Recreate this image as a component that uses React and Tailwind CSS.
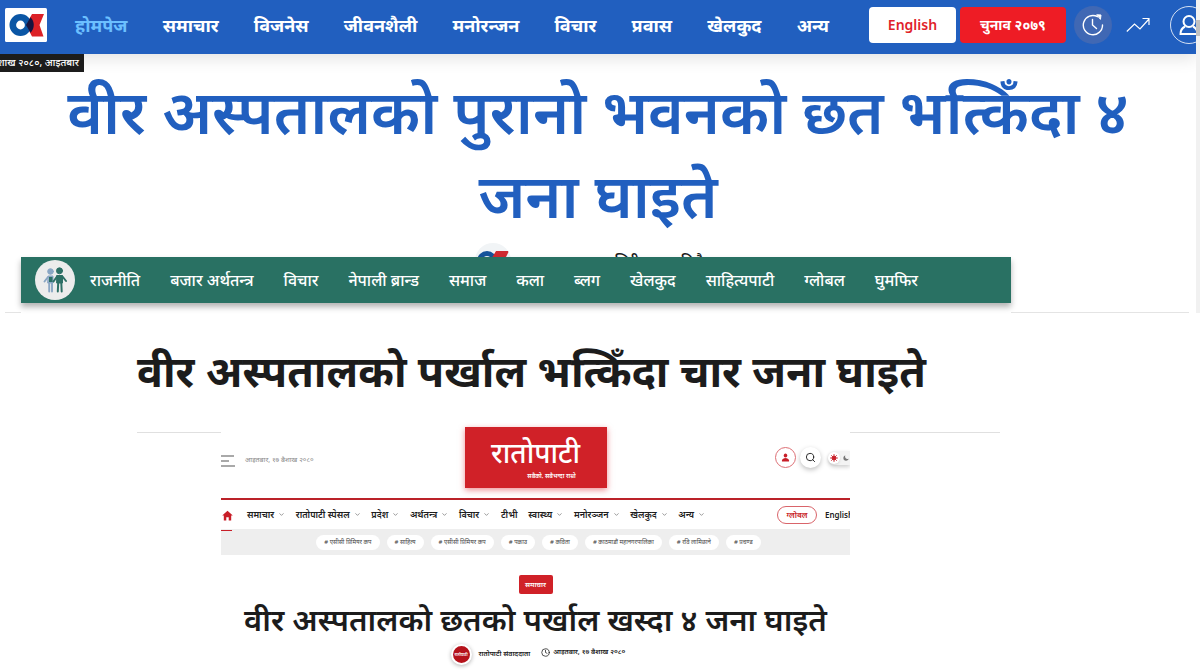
import { FiChevronDown, FiClock, FiSearch } from "react-icons/fi";
import { IoPerson, IoMoon } from "react-icons/io5";
import { IoMdHome } from "react-icons/io";

const topNav = ["होमपेज", "समाचार", "विजनेस", "जीवनशैली", "मनोरन्जन", "विचार", "प्रवास", "खेलकुद", "अन्य"];

const greenNav = [
  "राजनीति",
  "बजार अर्थतन्त्र",
  "विचार",
  "नेपाली ब्रान्ड",
  "समाज",
  "कला",
  "ब्लग",
  "खेलकुद",
  "साहित्यपाटी",
  "ग्लोबल",
  "घुमफिर",
];

const redNav = [
  { label: "समाचार", menu: true },
  { label: "रातोपाटी स्पेसल", menu: true },
  { label: "प्रदेश", menu: true },
  { label: "अर्थतन्त्र", menu: true },
  { label: "विचार", menu: true },
  { label: "टीभी", menu: false },
  { label: "स्वास्थ्य", menu: true },
  { label: "मनोरञ्जन", menu: true },
  { label: "खेलकुद", menu: true },
  { label: "अन्य", menu: true },
];

const tags = [
  "एसीसी प्रिमियर कप",
  "साहित्य",
  "एसीसी प्रिमियर कप",
  "पक्राउ",
  "कविता",
  "काठमाडौं महानगरपालिका",
  "रवि लामिछाने",
  "प्रचण्ड",
];

export default function App() {
  return (
    <div className="min-h-screen bg-white overflow-hidden font-['Noto_Sans','Noto_Sans_Devanagari',sans-serif] text-[#1c1c1c]">
      <KhabarPage />
      <GreenPage />
      <RatoPage />
    </div>
  );
}

function KhabarPage() {
  return (
    <section className="h-[257px] relative">
      <div className="h-full overflow-hidden mr-1">
        <header className="h-[54px] bg-[#215fbf] flex items-center pl-[5px] overflow-hidden shadow-[0_4px_16px_rgba(0,0,0,0.12)] relative">
          <a href="#" aria-label="OK" className="shrink-0 mb-1">
            <OkLogo />
          </a>
          <nav className="flex flex-1 justify-between ml-7 mr-10 mb-1 text-[18px] leading-7 font-bold whitespace-nowrap text-white">
            {topNav.map((t, i) => (
              <a key={t} href="#" className={i === 0 ? "text-[#6cc0ff]" : ""}>
                {t}
              </a>
            ))}
          </nav>
          <div className="flex items-center shrink-0 mb-1 text-white">
            <button className="w-[87px] h-9 rounded bg-white text-[#e01f2b] text-sm font-semibold">English</button>
            <button className="w-[106px] h-9 ml-1 rounded bg-[#ee1c25] text-sm font-bold whitespace-nowrap">
              चुनाव २०७९
            </button>
            <button aria-label="ताजा" className="size-[38px] ml-2 rounded-full bg-[#4068b4] grid place-items-center">
              <ClockArrow />
            </button>
            <button aria-label="ट्रेन्डिङ" className="ml-[14px]">
              <TrendLine />
            </button>
            <button
              aria-label="प्रोफाइल"
              className="size-[38px] ml-5 -mr-3 rounded-full border border-white/80 grid place-items-center"
            >
              <UserLine />
            </button>
          </div>
        </header>
        <div className="w-[84px] h-[18px] bg-[#1c1c1c] text-white text-[10px] leading-[17px] font-medium flex justify-end pr-[5px] whitespace-nowrap overflow-hidden relative">
          <span>१७ वैशाख २०८०, आइतबार</span>
        </div>
        <h1 className="text-center text-[#215fbf] font-semibold text-[61px] leading-[84px] -mt-[3px] px-12">
          वीर अस्पतालको पुरानो भवनको छत भत्किँदा ४ जना घाइते
        </h1>
        <div className="flex justify-center gap-[104px] mt-[6px] pr-1 text-sm font-semibold">
          <span className="size-9 rounded-full bg-[#f1f4f6] grid place-items-center overflow-hidden">
            <OkMark />
          </span>
          <span className="mt-2">शिरीषकुमार निरौला</span>
        </div>
      </div>
      {/* scrollbar */}
      <div className="absolute right-0 top-0 w-1 h-[313px] bg-[#f1f1f1]">
        <div className="h-4 mt-5 bg-[#c1c1c1]" />
      </div>
    </section>
  );
}

function GreenPage() {
  return (
    <section>
      <div className="h-14 ml-[5px] mr-[11px] pl-4 pr-[178px] border-b border-[#e4e4e4] relative">
        <div className="bg-white h-14">
          <nav className="h-[46px] bg-[#297163] shadow-[0_4px_6px_rgba(0,0,0,0.3)] flex items-center pl-[14px] text-white">
            <a href="#" aria-label="गृहपृष्ठ" className="size-10 rounded-full bg-[#ececec] grid place-items-center shrink-0">
              <PeopleLogo />
            </a>
            <ul className="flex flex-1 justify-between ml-[15px] mr-[93px] text-base font-medium whitespace-nowrap">
              {greenNav.map((t) => (
                <li key={t}>
                  <a href="#">{t}</a>
                </li>
              ))}
            </ul>
          </nav>
        </div>
      </div>
      <div className="ml-[137px] mr-[200px] h-[120px] border-b border-[#e0e0e0]">
        <h2 className="text-[43px] leading-[60px] pt-7 font-bold whitespace-nowrap">
          वीर अस्पतालको पर्खाल भत्किँदा चार जना घाइते
        </h2>
      </div>
    </section>
  );
}

function RatoPage() {
  return (
    <section className="relative bg-white ml-[221px] mr-[350px] -mt-[6px]">
      <div className="grid grid-cols-[1fr_auto_1fr] items-center h-[71px]">
        <div className="flex items-center gap-[10px] min-w-0 mb-1">
          <button aria-label="मेनु">
            <svg width="14" height="12" viewBox="0 0 14 12" stroke="#555" strokeWidth="1.2">
              <path d="M0 1h13M0 6h8M0 11h14" />
            </svg>
          </button>
          <span className="text-[7px] text-[#8a8a8a] whitespace-nowrap">आइतबार, १७ बैशाख २०८०</span>
        </div>
        <a
          href="#"
          className="w-[142px] h-[61px] mb-[10px] bg-[#d02128] text-white shadow-[0_2px_6px_rgba(220,30,40,0.5)] flex flex-col items-center justify-center"
        >
          <span className="text-[28px] leading-9 font-medium">रातोपाटी</span>
          <span className="text-[6px] leading-3 font-semibold pl-8">सबैको, सबैभन्दा राम्रो</span>
        </a>
        <div className="flex items-center justify-end overflow-hidden h-[61px] mb-[10px]">
          <button aria-label="लगइन" className="size-[21px] rounded-full border border-[#dd6f75] grid place-items-center">
            <IoPerson className="text-[9px] text-[#c81e28]" />
          </button>
          <button
            aria-label="खोज"
            className="size-[21px] ml-1 rounded-full bg-white shadow-[0_2px_5px_rgba(0,0,0,0.25)] grid place-items-center"
          >
            <FiSearch className="text-[11px]" />
          </button>
          <button
            aria-label="मोड"
            className="w-[22px] h-[14px] ml-[7px] rounded-l-full bg-[#f3f3f3] shadow-[0_2px_4px_rgba(0,0,0,0.2)] flex items-center gap-[3px]"
          >
            <span className="size-3 rounded-full bg-white shadow grid place-items-center">
              <SunDot />
            </span>
            <IoMoon className="text-[6px] text-[#777]" />
          </button>
        </div>
      </div>

      <nav className="h-[31px] border-t-2 border-[#bb2229] flex items-center text-[9px] font-semibold whitespace-nowrap">
        <a
          href="#"
          aria-label="गृहपृष्ठ"
          className="w-[11px] h-[31px] -mb-[2px] border-b border-[#c81e28] grid place-items-center shrink-0 relative"
        >
          <IoMdHome className="text-[13px] text-[#c81e28]" />
        </a>
        <ul className="flex flex-1 justify-between ml-[15px] mr-[72px]">
          {redNav.map(({ label, menu }) => (
            <li key={label}>
              <a href="#" className="flex items-center gap-1">
                {label}
                {menu && <FiChevronDown className="text-[7px] text-[#555]" />}
              </a>
            </li>
          ))}
        </ul>
        <a
          href="#"
          className="w-10 h-[18px] rounded-full border border-[#d9646a] text-[#c81e28] text-[8px] grid place-items-center shrink-0"
        >
          ग्लोबल
        </a>
        <a href="#" className="w-[25px] ml-2 text-[8px] overflow-hidden shrink-0">
          English
        </a>
      </nav>

      <ul className="h-[26px] bg-[#eeeeee] flex items-center justify-center gap-[7px] pl-[6px] text-[6px] leading-[15px] text-[#444] whitespace-nowrap">
        {tags.map((t, i) => (
          <li key={i}>
            <a href="#" className="block rounded-full bg-white px-2">
              # {t}
            </a>
          </li>
        ))}
      </ul>

      <article className="flex flex-col items-center">
        <span className="mt-5 w-[34px] h-[19px] rounded-xs bg-[#d02128] text-white text-[7px] leading-[19px] font-semibold text-center">
          समाचार
        </span>
        <h2 className="text-[31px] leading-[50px] font-semibold whitespace-nowrap">
          वीर अस्पतालको छतको पर्खाल खस्दा ४ जना घाइते
        </h2>
        <div className="flex items-center gap-[7px] pl-[5px] text-[7px] font-semibold whitespace-nowrap">
          <span className="size-[21px] rounded-full bg-[#b5121b] border-2 border-white shadow-[0_1px_4px_rgba(0,0,0,0.3)] text-white text-[4px] grid place-items-center">
            रातोपाटी
          </span>
          <span>रातोपाटी संवाददाता</span>
          <span className="flex items-center gap-[3px] ml-1 mb-1">
            <FiClock className="text-[9px]" />
            आइतबार, १७ बैशाख २०८०
          </span>
        </div>
      </article>
    </section>
  );
}

function OkLogo() {
  return (
    <svg width="42" height="34" viewBox="0 0 42 34">
      <rect width="42" height="34" rx="1.5" fill="#fff" />
      <path d="M27 6h12l-4.500 11 4 11.500H27L21 17z" fill="#dc2127" />
      <circle cx="15.500" cy="17" r="7.700" fill="none" stroke="#0a56a5" strokeWidth="6.600" />
      <path d="M25.500 9.200a11 11 0 0 1 0 15.600L21 17z" fill="#17143f" />
    </svg>
  );
}

function OkMark() {
  return (
    <svg width="34" height="24" viewBox="0 0 34 24">
      <circle cx="11" cy="12" r="7.500" fill="none" stroke="#15539b" strokeWidth="5" />
      <path d="M20 2h13l-5 10 4 10H20l-6-10z" fill="#cf2a30" />
    </svg>
  );
}

function ClockArrow() {
  return (
    <svg width="22" height="22" viewBox="0 0 22 22" fill="none" stroke="#fff" strokeWidth="1.4" strokeLinecap="round">
      <path d="M20.500 11A9.600 9.600 0 1 1 15.500 2.700" />
      <path d="M15 .8l4 .2-.5 4z" fill="#fff" strokeWidth="1" />
      <path d="M10.500 5.500V11l4 3.500" />
    </svg>
  );
}

function TrendLine() {
  return (
    <svg width="24" height="16" viewBox="0 0 24 16" fill="none" stroke="#fff" strokeWidth="1.2">
      <path d="M.8 14.500L8.500 7l5.500 5L23 2M16.500 1.500h6.500V8" />
    </svg>
  );
}

function UserLine() {
  return (
    <svg width="22" height="22" viewBox="0 0 22 22" fill="none" stroke="#fff" strokeWidth="2">
      <circle cx="11" cy="7.500" r="5.500" />
      <path d="M7 12.500c-3 1.500-4.500 3.500-4.500 7.500h17c0-4-1.500-6-4.500-7.500" />
    </svg>
  );
}

function PeopleLogo() {
  return (
    <svg width="24" height="26" viewBox="0 0 24 26" fill="none" strokeLinecap="round">
      <g stroke="#8aa6c4" fill="#8aa6c4">
        <circle cx="7.500" cy="4.500" r="2.800" />
        <path d="M5.500 9h4.500v7H5z" />
        <path d="M5 10l-3.500 4.500M6.200 16v8.500M9 16v8.500" strokeWidth="1.900" />
      </g>
      <g stroke="#2c6f65" fill="#2c6f65">
        <circle cx="16.500" cy="3.800" r="3" />
        <path d="M14 8.500h5.500v7.500H14z" />
        <path d="M19.500 9.500l3.500 4.500M14 9.500l-3.500 5M15.200 16l-.4 8.500M18.300 16l.4 8.500" strokeWidth="2" />
      </g>
      <path d="M6 10h3.500v5H6z" fill="#2c6f65" />
    </svg>
  );
}

function SunDot() {
  return (
    <svg width="8" height="8" viewBox="0 0 8 8" stroke="#c81e28" strokeWidth=".8">
      <circle cx="4" cy="4" r="2" fill="#c81e28" />
      <path d="M4 0v8M0 4h8M1.200 1.200l5.600 5.600M6.800 1.200L1.200 6.800" />
    </svg>
  );
}
